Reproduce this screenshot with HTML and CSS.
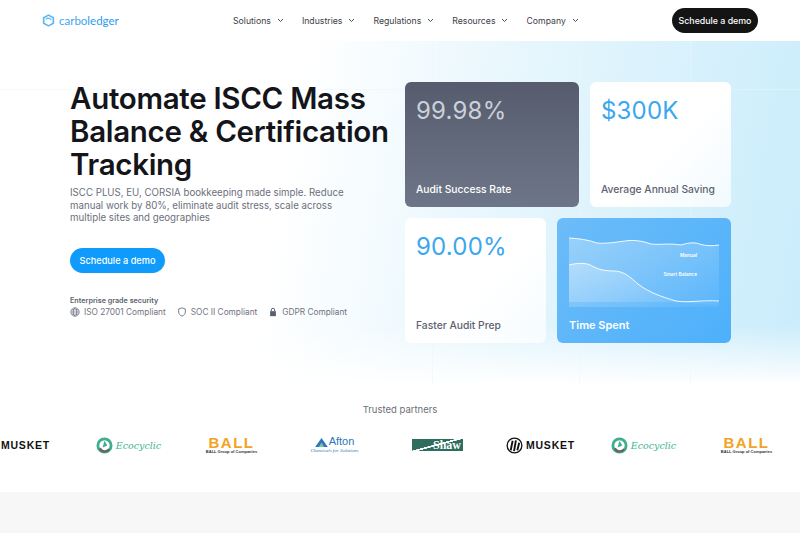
FILE: index.html
```html
<!DOCTYPE html>
<html lang="en">
<head>
    <meta charset="UTF-8">
    <meta name="viewport" content="width=device-width, initial-scale=1.0">
    <title>Carboledger</title>
    <link rel="stylesheet" href="styles.css">
</head>
<body>
    <nav class="navbar">
        <a class="brand" href="#">
            <svg class="brand-icon" viewBox="0 0 14 14" width="13" height="13" fill="none" stroke="#5cb8f5" stroke-width="1.8">
                <path d="M7 1.2 12.2 4v6L7 12.8 1.8 10V4z" stroke-linejoin="round"/>
                <path d="M4 5.6c1.6-1.3 4.2-1.2 6 .6" stroke-width="1.2"/>
            </svg>
            <span>carbo<b>ledger</b></span>
        </a>
        <div class="nav-links">
            <a href="#">Solutions <svg class="chev" viewBox="0 0 8 6" width="7" height="5"><path d="M1 1.2 4 4.2 7 1.2"/></svg></a>
            <a href="#">Industries <svg class="chev" viewBox="0 0 8 6" width="7" height="5"><path d="M1 1.2 4 4.2 7 1.2"/></svg></a>
            <a href="#">Regulations <svg class="chev" viewBox="0 0 8 6" width="7" height="5"><path d="M1 1.2 4 4.2 7 1.2"/></svg></a>
            <a href="#">Resources <svg class="chev" viewBox="0 0 8 6" width="7" height="5"><path d="M1 1.2 4 4.2 7 1.2"/></svg></a>
            <a href="#">Company <svg class="chev" viewBox="0 0 8 6" width="7" height="5"><path d="M1 1.2 4 4.2 7 1.2"/></svg></a>
        </div>
        <a class="btn-dark" href="#">Schedule a demo</a>
    </nav>

    <section class="hero">
        <div class="hero-text">
            <h1>Automate ISCC Mass Balance &amp; Certification Tracking</h1>
            <p class="lead">ISCC PLUS, EU, CORSIA bookkeeping made simple. Reduce manual work by 80%, eliminate audit stress, scale across multiple sites and geographies</p>
            <a class="btn-blue" href="#">Schedule a demo</a>
            <div class="security">
                <h4>Enterprise grade security</h4>
                <ul>
                    <li>
                        <svg viewBox="0 0 12 12" width="10" height="10" fill="none" stroke="#6b7280" stroke-width="0.9"><circle cx="6" cy="6" r="5"/><ellipse cx="6" cy="6" rx="2.2" ry="5"/><path d="M1 6h10M1.7 3.5h8.6M1.7 8.5h8.6"/></svg>
                        ISO 27001 Compliant
                    </li>
                    <li>
                        <svg viewBox="0 0 12 12" width="10" height="10" fill="none" stroke="#6b7280" stroke-width="1.1"><path d="M6 1 10 2.4V6c0 2.4-1.7 4-4 5-2.300-1-4-2.600-4-5V2.400z"/></svg>
                        SOC II Compliant
                    </li>
                    <li>
                        <svg viewBox="0 0 12 12" width="10" height="10" fill="#5b6170"><path d="M2.500 5h7v6h-7z"/><path d="M4 5V3.500a2 2 0 0 1 4 0V5" fill="none" stroke="#5b6170" stroke-width="1.200"/></svg>
                        GDPR Compliant
                    </li>
                </ul>
            </div>
        </div>

        <div class="stats">
            <div class="stat-row">
                <div class="card card-dark card-wide">
                    <div class="value">99.98%</div>
                    <div class="label">Audit Success Rate</div>
                </div>
                <div class="card card-light card-narrow">
                    <div class="value">$300K</div>
                    <div class="label">Average Annual Saving</div>
                </div>
            </div>
            <div class="stat-row">
                <div class="card card-light card-narrow">
                    <div class="value">90.00%</div>
                    <div class="label">Faster Audit Prep</div>
                </div>
                <div class="card card-blue card-wide">
                    <div class="chart">
                        <svg viewBox="0 0 150 70" width="150" height="70" preserveAspectRatio="none">
                            <defs>
                                <linearGradient id="fill1" x1="0" y1="0" x2="1" y2="1">
                                    <stop offset="0" stop-color="#fff" stop-opacity="0.32"/>
                                    <stop offset="1" stop-color="#fff" stop-opacity="0.05"/>
                                </linearGradient>
                            </defs>
                            <path d="M0 1C10 1.500 20 3 28 6c8 1 20-1 32-2.500 8-.5 15 1 22 3.500 10 1 18-1 30 1 8-2.500 14-3 20-.5 6 1.500 12 1.500 18 .5V70H0z" fill="url(#fill1)"/>
                            <path d="M0 33c8-2 18-3 25 2 6 3 12 4 20 4 10 0 16 6 24 13 10 8 24 13 38 17 12 2 24 3 43 4V70H0z" fill="url(#fill1)" transform="translate(0 -5)"/>
                            <path d="M0 1C10 1.500 20 3 28 6c8 1 20-1 32-2.500 8-.5 15 1 22 3.500 10 1 18-1 30 1 8-2.500 14-3 20-.5 6 1.500 12 1.500 18 .5" fill="none" stroke="#fff" stroke-width="1" stroke-opacity="0.9"/>
                            <path d="M0 28c8-2 18-3 25 2 6 3 12 4 20 4 10 0 16 6 24 13 10 8 24 13 38 17 12 2 24-1 43 0" fill="none" stroke="#fff" stroke-width="1" stroke-opacity="0.9"/>
                        </svg>
                        <span class="chart-tag tag-manual">Manual</span>
                        <span class="chart-tag tag-smart">Smart Balance</span>
                    </div>
                    <div class="label">Time Spent</div>
                </div>
            </div>
        </div>
    </section>

    <section class="partners">
        <h3>Trusted partners</h3>
        <div class="logo-track">
            <div class="logo logo-musket"><span class="musket-word">MUSKET</span></div>
            <div class="logo logo-eco">
                <svg viewBox="0 0 18 18" width="17" height="17"><circle cx="9" cy="9" r="7" fill="none" stroke="#3fae8e" stroke-width="3"/><path d="M4 12a6 6 0 0 0 10 1" fill="none" stroke="#666" stroke-width="2.500"/><path d="M9 4l3 5-5 2z" fill="#3fae8e"/></svg>
                <span>Ecocyclic</span>
            </div>
            <div class="logo logo-ball">
                <div class="ball-word">BALL</div>
                <div class="ball-sub">BALL Group of Companies</div>
            </div>
            <div class="logo logo-afton">
                <div class="afton-top">
                    <svg viewBox="0 0 14 10" width="13" height="9"><path d="M0 10 7 0l7 10z" fill="#2c77b8"/><path d="M4 10 7 5l3 5z" fill="#7cc0a8"/></svg>
                    <span>Afton</span>
                </div>
                <div class="afton-sub">Chemicals for Solutions</div>
            </div>
            <div class="logo logo-shaw">
                <div class="shaw-box"><span>Shaw</span></div>
            </div>
            <div class="logo logo-musket">
                <svg viewBox="0 0 18 18" width="17" height="17"><circle cx="9" cy="9" r="7.800" fill="#fff" stroke="#111" stroke-width="1.400"/><path d="M5 14 7 4M8.500 15 10.500 3.500M12 14l2-8" stroke="#111" stroke-width="2" fill="none"/></svg>
                <span class="musket-word">MUSKET</span>
            </div>
            <div class="logo logo-eco">
                <svg viewBox="0 0 18 18" width="17" height="17"><circle cx="9" cy="9" r="7" fill="none" stroke="#3fae8e" stroke-width="3"/><path d="M4 12a6 6 0 0 0 10 1" fill="none" stroke="#666" stroke-width="2.500"/><path d="M9 4l3 5-5 2z" fill="#3fae8e"/></svg>
                <span>Ecocyclic</span>
            </div>
            <div class="logo logo-ball">
                <div class="ball-word">BALL</div>
                <div class="ball-sub">BALL Group of Companies</div>
            </div>
        </div>
    </section>

    <div class="next-section"></div>
</body>
</html>
```
FILE: styles.css
```css
/* Style global */
body {
    font-family: 'Inter', 'Open Sans', sans-serif;
    margin: 0;
    padding: 0;
    background: #fff;
    color: #14151a;
    height: 533px;
    overflow: hidden;
    display: flex;
    flex-direction: column;
}

a {
    text-decoration: none;
    color: inherit;
}

/* Barre de navigation */
.navbar {
    height: 41px;
    flex: none;
    display: flex;
    align-items: center;
    padding: 0 42px;
    background: #fff;
}

.brand {
    display: flex;
    align-items: center;
    gap: 4px;
    width: 191px;
    font-size: 11.500px;
    color: #3ea6f2;
    font-family: 'Lato', sans-serif;
}

.brand b {
    font-weight: 400;
    color: #2b9bf0;
}

.nav-links {
    display: flex;
    gap: 18px;
    font-size: 8.700px;
    color: #3d4048;
}

.nav-links a {
    display: flex;
    align-items: center;
    gap: 6px;
}

.chev {
    fill: none;
    stroke: #3d4048;
    stroke-width: 1.100;
}

.btn-dark {
    margin-left: auto;
    background: #141414;
    color: #fff;
    font-size: 8.800px;
    font-weight: 500;
    width: 86px;
    height: 25px;
    border-radius: 13px;
    display: flex;
    align-items: center;
    justify-content: center;
}

/* Hero */
.hero {
    height: 344px;
    flex: none;
    display: flex;
    padding: 41px 70px 0;
    box-sizing: border-box;
    background:
        linear-gradient(#eaf6fc80, #eaf6fc80) 0 48px / 100% 1px no-repeat,
        linear-gradient(#eaf6fc80, #eaf6fc80) 432px 0 / 1px 100% no-repeat,
        linear-gradient(#eaf6fc80, #eaf6fc80) 579px 0 / 1px 100% no-repeat,
        linear-gradient(#eaf6fc80, #eaf6fc80) 690px 0 / 1px 100% no-repeat,
        linear-gradient(to top, #fff 0, #ffffff00 60px),
        linear-gradient(100deg, #fff 36%, #e6f6fd 62%, #c9ecfb 100%);
}

.hero-text {
    width: 335px;
    flex: none;
}

h1 {
    font-size: 29.500px;
    line-height: 33px;
    font-weight: 600;
    letter-spacing: -0.3px;
    margin: 0;
    white-space: nowrap;
    width: 335px;
    white-space: normal;
}

.lead {
    margin: 6px 0 0;
    font-size: 9.700px;
    line-height: 12.500px;
    color: #6b6f7b;
    width: 290px;
}

.btn-blue {
    margin-top: 23px;
    background: #0f9bfb;
    color: #fff;
    font-size: 9.200px;
    font-weight: 500;
    width: 95px;
    height: 25px;
    border-radius: 13px;
    display: flex;
    align-items: center;
    justify-content: center;
}

.security {
    margin-top: 23px;
}

.security h4 {
    margin: 0;
    font-size: 7.200px;
    font-weight: 600;
    color: #5b6170;
    line-height: 9px;
}

.security ul {
    margin: 2px 0 0;
    padding: 0;
    list-style: none;
    display: flex;
    gap: 11px;
    font-size: 8.300px;
    color: #6f7380;
}

.security li {
    display: flex;
    align-items: center;
    gap: 4px;
}

/* Cartes */
.stats {
    display: flex;
    flex-direction: column;
    gap: 11px;
    margin-left: 0;
}

.stat-row {
    display: flex;
    gap: 11px;
    height: 125px;
}

.card {
    box-sizing: border-box;
    border-radius: 6px;
    padding: 15px 11px 11px;
    display: flex;
    flex-direction: column;
    justify-content: space-between;
}

.card-wide {
    width: 174px;
}

.card-narrow {
    width: 141px;
}

.value {
    font-size: 24px;
    line-height: 28px;
    letter-spacing: 0.2px;
}

.label {
    font-size: 10.300px;
    font-weight: 500;
    line-height: 13px;
}

.card-dark {
    background: linear-gradient(#565c6e, #6d7688);
    color: #fff;
}

.card-dark .value {
    color: #ccd0d8;
}

.card-light {
    background: linear-gradient(135deg, #ffffff 55%, #ffffffb0);
}

.card-light .value {
    color: #3ba7ee;
}

.card-light .label {
    color: #5e6270;
}

.card-blue {
    background: linear-gradient(135deg, #6cbcf8, #4db0fb);
    color: #fff;
    padding: 19px 12px 11px;
}

.card-blue .label {
    font-size: 11px;
    font-weight: 600;
}

.chart {
    position: relative;
    width: 150px;
    height: 70px;
}

.chart svg {
    display: block;
}

.chart-tag {
    position: absolute;
    right: 22px;
    font-size: 4.800px;
    font-weight: 600;
    color: #fff;
}

.tag-manual {
    top: 15px;
}

.tag-smart {
    top: 34px;
}

/* Partenaires */
.partners {
    height: 107px;
    flex: none;
    overflow: hidden;
    text-align: center;
}

.partners h3 {
    margin: 18px 0 0;
    font-size: 9.500px;
    font-weight: 400;
    color: #6e6f75;
    line-height: 13px;
}

.logo-track {
    display: grid;
    grid-template-columns: repeat(8, 103px);
    margin: 17px 0 0 -26px;
    height: 24px;
    width: 900px;
}

.logo {
    display: flex;
    flex-direction: column;
    align-items: center;
    justify-content: center;
}

.logo-musket,
.logo-eco {
    flex-direction: row;
    gap: 3px;
}

.musket-word {
    font-family: 'Liberation Sans', sans-serif;
    font-weight: 700;
    font-size: 10.500px;
    letter-spacing: 0.8px;
    color: #111;
}

.logo-eco span {
    font-family: 'DejaVu Serif', serif;
    font-style: italic;
    font-size: 9.500px;
    color: #3fb58f;
}

.ball-word {
    font-family: 'Liberation Sans', sans-serif;
    font-weight: 700;
    font-size: 15px;
    line-height: 13px;
    letter-spacing: 1.500px;
    color: #f2a224;
}

.ball-sub {
    font-family: 'Liberation Sans', sans-serif;
    font-weight: 700;
    font-size: 4px;
    line-height: 6px;
    color: #333;
}

.afton-top {
    display: flex;
    align-items: flex-end;
    gap: 1px;
    font-family: 'Liberation Sans', sans-serif;
    font-size: 11px;
    line-height: 11px;
    color: #2c77b8;
}

.afton-sub {
    font-family: 'Liberation Serif', serif;
    font-style: italic;
    font-size: 5px;
    line-height: 8px;
    color: #2c77b8;
}

.shaw-box {
    width: 51px;
    height: 12px;
    background: linear-gradient(165deg, #2f6e5f 45%, #fff 46%, #fff 52%, #2f6e5f 53%);
    display: flex;
    align-items: center;
    justify-content: flex-end;
    padding-right: 2px;
    box-sizing: border-box;
}

.shaw-box span {
    font-family: 'Liberation Serif', serif;
    font-weight: 700;
    font-size: 12px;
    line-height: 12px;
    color: #fff;
}

.next-section {
    flex: 1;
    background: #f7f7f7;
}
```
